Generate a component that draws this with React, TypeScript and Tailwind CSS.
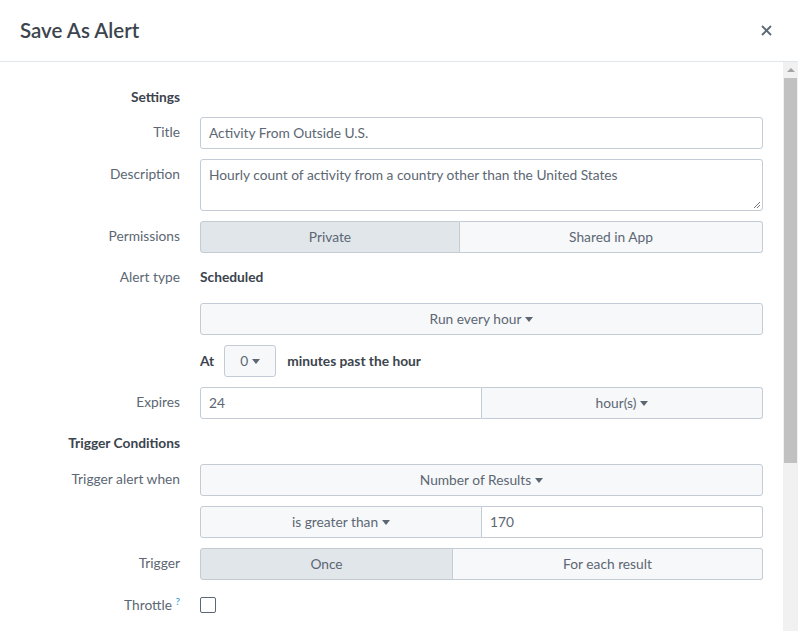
import React from 'react';

const font = { fontFamily: 'Lato, "Open Sans", sans-serif' };

function Caret() {
  return <span className="ml-1 inline-block h-0 w-0 border-x-[4px] border-t-[5px] border-x-transparent border-t-[#5c6773] align-middle" />;
}

function Row({ label, children, bold, h, pt }: { label?: React.ReactNode; children?: React.ReactNode; bold?: boolean; h?: string; pt?: string }) {
  return (
    <div className={`flex items-start ${h ?? ''}`}>
      <div
        className={`w-[180px] shrink-0 text-right text-[13.75px] ${pt ?? 'pt-[5px]'} ${bold ? 'font-bold text-[#3c444d]' : 'text-[#5c6773]'}`}
      >
        {label}
      </div>
      <div className="ml-[20px] flex-1">{children}</div>
    </div>
  );
}

const btnBase = 'flex h-[32px] items-center justify-center border border-[#c3cbd4] text-[13.75px] text-[#5c6773]';
const btn = `${btnBase} bg-[#f7f8fa]`;
const btnOn = `${btnBase} bg-[#e1e6eb]`;
const input = 'flex h-[32px] items-center border border-[#c3cbd4] bg-white px-[8px] text-[13.75px] text-[#5c6773]';

export default function App() {
  return (
    <div className="h-[631px] w-[798px] overflow-hidden bg-white" style={font}>
      <header className="flex h-[62px] items-center justify-between border-b border-[#e1e6eb] pl-[20px] pr-[26px]">
        <h1 className="text-[20.5px] font-semibold text-[#3c444d]">Save As Alert</h1>
        <svg width="11" height="11" viewBox="0 0 11 11" className="text-[#5c6773]">
          <path d="M1 1L10 10M10 1L1 10" stroke="currentColor" strokeWidth="1.8" />
        </svg>
      </header>
      <div className="flex h-[569px]">
        <div className="flex flex-1 flex-col gap-[10px] pt-[25px] pr-[20px]">
          <Row label="Settings" bold h="h-[20px]" pt="pt-0" />
          <Row label="Title">
            <div className={`${input} rounded-[3px]`}>Activity From Outside U.S.</div>
          </Row>
          <Row label="Description">
            <div className="relative h-[52px] rounded-[3px] border border-[#c3cbd4] bg-white px-[8px] pt-[5px] text-[13.75px] text-[#5c6773]">
              Hourly count of activity from a country other than the United States
              <svg width="8" height="8" viewBox="0 0 8 8" className="absolute right-[1px] bottom-[1px]">
                <path d="M7 1L1 7M7 4L4 7" stroke="#777" strokeWidth="1" />
              </svg>
            </div>
          </Row>
          <Row label="Permissions">
            <div className="flex">
              <div className={`${btnOn} w-[260px] rounded-l-[3px]`}>Private</div>
              <div className={`${btn} flex-1 rounded-r-[3px] border-l-0`}>Shared in App</div>
            </div>
          </Row>
          <Row label="Alert type" h="h-[30px]" pt="pt-[4px]">
            <div className="pt-[4px] text-[13.75px] font-bold text-[#3c444d]">Scheduled</div>
          </Row>
          <Row>
            <div className={`${btn} rounded-[3px]`}>
              Run every hour <Caret />
            </div>
          </Row>
          <Row>
            <div className="flex items-center text-[13.75px] font-bold text-[#3c444d]">
              <span>At</span>
              <div className={`${btn} ml-[10px] w-[52px] rounded-[3px] font-normal`}>
                0 <Caret />
              </div>
              <span className="ml-[11px]">minutes past the hour</span>
            </div>
          </Row>
          <Row label="Expires">
            <div className="flex">
              <div className={`${input} w-[282px] rounded-l-[3px]`}>24</div>
              <div className={`${btn} flex-1 rounded-r-[3px] border-l-0`}>
                hour(s) <Caret />
              </div>
            </div>
          </Row>
          <Row label="Trigger Conditions" bold h="h-[25px]" pt="pt-[4px]" />
          <Row label="Trigger alert when">
            <div className={`${btn} rounded-[3px]`}>
              Number of Results <Caret />
            </div>
          </Row>
          <Row>
            <div className="flex">
              <div className={`${btn} w-[282px] rounded-l-[3px]`}>
                is greater than <Caret />
              </div>
              <div className={`${input} flex-1 rounded-r-[3px] border-l-0`}>170</div>
            </div>
          </Row>
          <Row label="Trigger">
            <div className="flex">
              <div className={`${btnOn} w-[253px] rounded-l-[3px]`}>Once</div>
              <div className={`${btn} flex-1 rounded-r-[3px] border-l-0`}>For each result</div>
            </div>
          </Row>
          <Row
            label={
              <span>
                Throttle <sup className="text-[10px] text-[#1a9bd7]">?</sup>
              </span>
            }
          >
            <div className="pt-[7px]">
              <div className="h-[16px] w-[16px] rounded-[2px] border border-[#5c6773] bg-white" />
            </div>
          </Row>
        </div>
        <div className="flex w-[15px] flex-col bg-[#f1f1f1]">
          <div className="flex h-[16px] items-center justify-center">
            <span className="h-0 w-0 border-x-[4px] border-b-[4px] border-x-transparent border-b-[#a3a3a3]" />
          </div>
          <div className="mx-[1px] h-[385px] bg-[#c1c1c1]" />
        </div>
      </div>
    </div>
  );
}
